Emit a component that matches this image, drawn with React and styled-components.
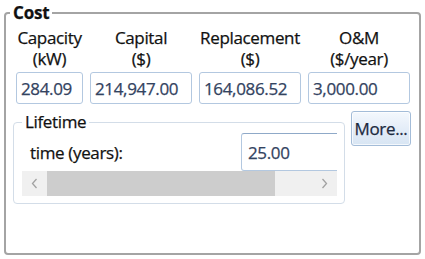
import React from 'react';
import styled, { createGlobalStyle } from 'styled-components';

const GlobalStyle = createGlobalStyle`
  html, body { margin: 0; padding: 0; background: #ffffff; }
  body {
    font-family: "Open Sans", "Noto Sans", sans-serif;
    color: #111111;
    letter-spacing: -0.35px;
    -webkit-text-stroke: 0.25px currentColor;
  }
  * { box-sizing: border-box; }
`;

const Group = styled.fieldset`
  margin: 3px 4px 0 4px;
  height: 252px;
  padding: 0;
  border: 2px solid #a4a4a4;
  border-radius: 4px;
  min-inline-size: 0;
`;

const GroupTitle = styled.legend`
  margin-left: 4px;
  padding: 0 3px;
  font-size: 17px;
  line-height: 20px;
  font-weight: 700;
  letter-spacing: -0.2px;
  color: #111111;
`;

const Body = styled.div`
  display: flex;
  flex-direction: column;
  padding: 4px 0 0 7px;
`;

const Columns = styled.div`
  display: grid;
  grid-template-columns: 67px 102px 102px 102px;
  column-gap: 7px;
  margin-left: 3px;
`;

const Field = styled.div`
  display: flex;
  flex-direction: column;
  align-items: stretch;
`;

const Header = styled.div`
  font-size: 17px;
  line-height: 21px;
  text-align: center;
  white-space: pre-line;
  color: #111111;
`;

const ValueBox = styled.div`
  margin-top: 3px;
  height: 32px;
  display: flex;
  align-items: center;
  padding-left: ${p => p.$pad || 4}px;
  border: 1px solid #b3c8e0;
  border-radius: 3px;
  font-size: 17px;
  color: #33435f;
  background: #ffffff;
  white-space: nowrap;
`;

const LowerRow = styled.div`
  display: flex;
  align-items: flex-start;
  gap: 6px;
  margin-top: 8px;
`;

const SubGroup = styled.fieldset`
  margin: 0;
  width: 332px;
  padding: 0 7px 7px 8px;
  border: 1px solid #d3dde8;
  border-radius: 4px;
  min-inline-size: 0;
`;

const SubTitle = styled.legend`
  padding: 0 3px;
  font-size: 17px;
  line-height: 20px;
  color: #111111;
`;

const Viewport = styled.div`
  overflow: hidden;
  padding-top: 1px;
`;

const ScrollRow = styled.div`
  display: flex;
  align-items: center;
  height: 38px;
`;

const RowLabel = styled.div`
  flex: 0 0 219px;
  padding-left: 8px;
  font-size: 17px;
  color: #111111;
`;

const InlineBox = styled(ValueBox)`
  margin-top: 0;
  flex: 0 0 140px;
  height: 38px;
  border-top-color: #8fa9c8;
`;

const ScrollBar = styled.div`
  display: flex;
  height: 25px;
  background: #f0f0f0;
`;

const ArrowBtn = styled.div`
  flex: 0 0 25px;
  display: flex;
  align-items: center;
  justify-content: center;
`;

const Thumb = styled.div`
  flex: 0 0 228px;
  background: #cdcdcd;
`;

const Track = styled.div`
  flex: 1 1 auto;
`;

const MoreButton = styled.button`
  margin-top: -1px;
  width: 60px;
  height: 35px;
  padding: 0;
  border: 1px solid #a3bcd8;
  border-radius: 3px;
  background: linear-gradient(#f4f8fd, #e4edf8 50%, #d8e5f3);
  box-shadow: inset 0 0 0 1px rgba(255,255,255,0.7);
  font-family: "Open Sans", "Noto Sans", sans-serif;
  letter-spacing: -0.35px;
  -webkit-text-stroke: 0.25px currentColor;
  font-size: 17px;
  color: #1c2a40;
`;

const Chevron = ({ dir }) => (
  <svg width="7" height="11" viewBox="0 0 7 11">
    <polyline
      points={dir === 'left' ? '5.5,1 1.5,5.5 5.5,10' : '1.5,1 5.5,5.5 1.5,10'}
      fill="none"
      stroke="#a2a2a2"
      strokeWidth="1.3"
    />
  </svg>
);

const fields = [
  { label: 'Capacity\n(kW)', value: '284.09' },
  { label: 'Capital\n($)', value: '214,947.00' },
  { label: 'Replacement\n($)', value: '164,086.52' },
  { label: 'O&M\n($/year)', value: '3,000.00' },
];

export default function App() {
  return (
    <>
      <GlobalStyle />
      <Group>
        <GroupTitle>Cost</GroupTitle>
        <Body>
          <Columns>
            {fields.map(f => (
              <Field key={f.label}>
                <Header>{f.label}</Header>
                <ValueBox>{f.value}</ValueBox>
              </Field>
            ))}
          </Columns>
          <LowerRow>
            <SubGroup>
              <SubTitle>Lifetime</SubTitle>
              <Viewport>
                <ScrollRow>
                  <RowLabel>time (years):</RowLabel>
                  <InlineBox $pad={6}>25.00</InlineBox>
                </ScrollRow>
                <ScrollBar>
                  <ArrowBtn><Chevron dir="left" /></ArrowBtn>
                  <Thumb />
                  <Track />
                  <ArrowBtn><Chevron dir="right" /></ArrowBtn>
                </ScrollBar>
              </Viewport>
            </SubGroup>
            <MoreButton>More...</MoreButton>
          </LowerRow>
        </Body>
      </Group>
    </>
  );
}
